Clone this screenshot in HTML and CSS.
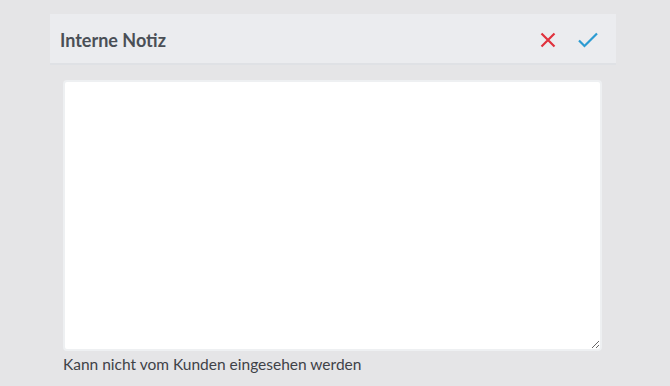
FILE: index.html
```html
<!DOCTYPE html>
<html>
<head>
<meta charset="utf-8">
<link rel="stylesheet" href="styles.css">
</head>
<body>
<div class="panel">
  <div class="header">
    <h1 class="title">Interne Notiz</h1>
    <div class="actions">
      <button class="btn cancel" aria-label="Abbrechen">
        <svg width="16" height="16" viewBox="0 0 16 16"><path d="M1.5 1.5 L14.5 14.5 M14.5 1.5 L1.5 14.5" stroke="#e0323d" stroke-width="2.2" fill="none"/></svg>
      </button>
      <button class="btn confirm" aria-label="Speichern">
        <svg width="20" height="16" viewBox="0 0 20 16"><path d="M1 8.5 L6.5 14 L19 1.5" stroke="#2b9bd2" stroke-width="2.2" fill="none"/></svg>
      </button>
    </div>
  </div>
  <div class="body">
    <textarea class="note"></textarea>
    <p class="hint">Kann nicht vom Kunden eingesehen werden</p>
  </div>
</div>
</body>
</html>
```
FILE: styles.css
```css
html, body {
  margin: 0;
  padding: 0;
  background: #e5e5e7;
  font-family: Lato, "Open Sans", sans-serif;
}
.panel {
  margin: 14px 0 0 50px;
  width: 566px;
}
.header {
  height: 49px;
  background: #ebecef;
  border-bottom: 2px solid #dfe1e5;
  display: flex;
  align-items: center;
  justify-content: space-between;
  padding: 0 0 0 10px;
}
.title {
  margin: 0;
  padding-top: 2px;
  font-size: 18px;
  font-weight: 700;
  color: #4a4f56;
}
.actions {
  display: flex;
  align-items: center;
  gap: 22px;
  padding: 2px 18px 0 0;
}
.btn {
  border: 0;
  background: none;
  padding: 0;
  display: flex;
}
.body {
  padding: 15px 14px 0 13px;
}
.note {
  display: block;
  box-sizing: border-box;
  width: 539px;
  height: 271px;
  margin: 0;
  border: 2px solid #eef0f2;
  border-radius: 4px;
  background: #fff;
}
.hint {
  margin: 4px 0 0 0;
  font-size: 15.5px;
  color: #3f4247;
}
```
